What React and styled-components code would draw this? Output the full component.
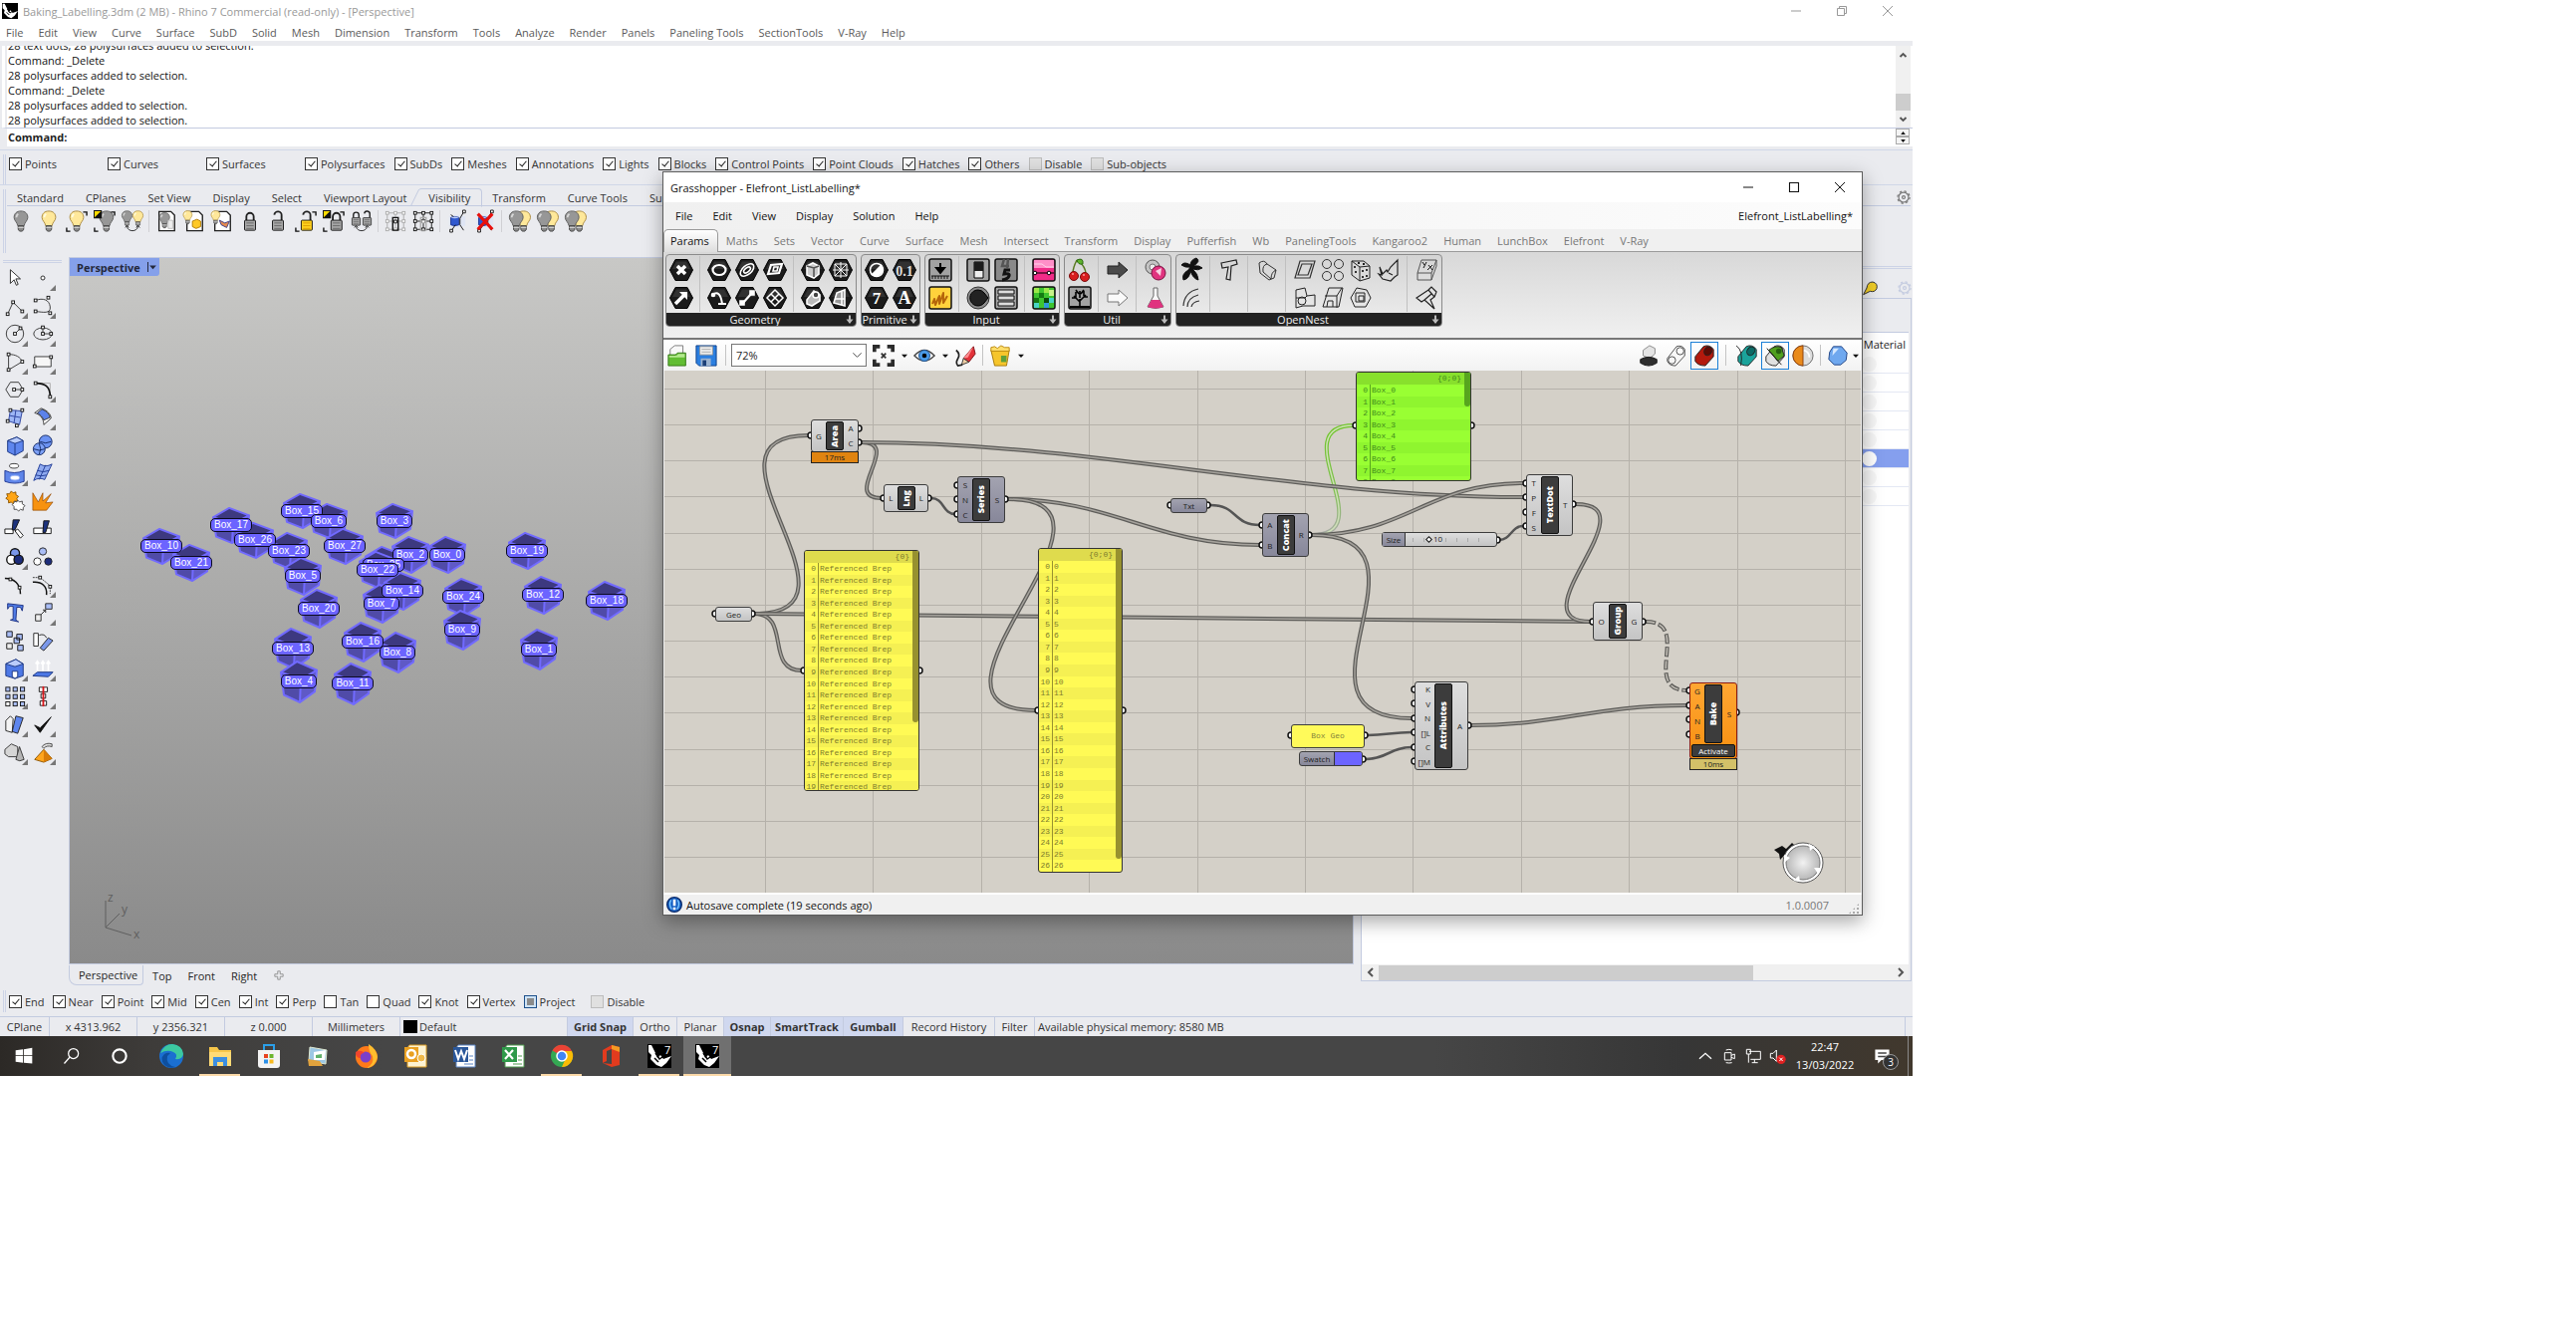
import React from 'react'
import styled, { createGlobalStyle, css } from 'styled-components'

const GlobalStyle = createGlobalStyle`
  *, *::before, *::after {
    box-sizing: border-box;
  }
  body {
    margin: 0;
    background: #fff;
    font-family: 'Open Sans', 'Noto Sans', sans-serif;
    font-size: 11px;
    line-height: 15px;
    color: #1e1e1e;
  }
  button, input, select {
    font: inherit;
    color: inherit;
    margin: 0;
    padding: 0;
    border: 0;
    background: none;
  }
`

const line = '#c3cbe0'
const chrome = '#eaebef'

/* ---------- icons ---------- */

const Svg = styled.svg`
  display: block;
  flex: none;
  width: ${p => p.$size || 24}px;
  height: ${p => p.$size || 24}px;
  overflow: visible;
`

const Icon = ({ name, size }) => (
  <Svg viewBox="0 0 24 24" $size={size} aria-hidden="true">{icons[name]}</Svg>
)

const Bulb = ({ on, x = 0, y = 0, s = 1 }) => (
  <g transform={`translate(${x} ${y}) scale(${s})`}>
    <path d="M12 1C7 1 4.500 4 4.500 8c0 3.500 3.500 5 4 9h7c.5-4 4-5.500 4-9C19.500 4 17 1 12 1z" fill={on ? '#ffe89a' : '#979797'} stroke={on ? '#a8873a' : '#5a5a5a'} />
    <path d="M9 4c-1.500 1-2 2.500-2 4" stroke={on ? '#fffbe0' : '#d8d8d8'} strokeWidth="2" fill="none" />
    <path d="M9 17h6v4l-1.500 2h-3L9 21z" fill="#8a8a8a" stroke="#444" />
    <path d="M9 19h6" stroke="#ddd" />
  </g>
)

const Padlock = ({ open, gold, x = 0, y = 0, s = 1 }) => (
  <g transform={`translate(${x} ${y}) scale(${s})`}>
    <path d={open ? 'M16 11V6a4 4 0 0 0-8-1' : 'M8 11V7a4 4 0 0 1 8 0v4'} fill="none" stroke="#222" strokeWidth="2" />
    <rect x="6" y="11" width="12" height="11" rx="1" fill={gold ? '#ffd21f' : '#a6a6a6'} stroke="#111" />
    <path d="M8 14h8M8 17h8M8 20h8" stroke={gold ? '#d89a00' : '#666'} />
  </g>
)

const Corners = () => <path d="M19 2h4v4M1 19v4h4" fill="none" stroke="#111" strokeWidth="1.500" />
const Invert = () => (
  <g>
    <path d="M0 0h9v9H0z" fill="#111" />
    <path d="M1 1h7L1 8z" fill="#ffdc00" />
  </g>
)
const Swap = () => <path d="M6 18c1 6 11 6 12 0M4 19l2-2 2 2M16 19l2-2 2 2" fill="none" stroke="#222" />
const Sheet = () => <path d="M4 1.500h13l4 4v17H4z" fill="#fff" stroke="#222" strokeWidth="1.500" />
const PointGrid = ({ dark }) => (
  <g fill="#fff" stroke={dark ? '#111' : '#aaa'}>
    <path d="M3 3h18v18H3zM12 3v18M3 12h18" fill="none" />
    {[3, 12, 21].map(x => [3, 12, 21].map(y => <rect key={`${x}-${y}`} x={x - 1.5} y={y - 1.5} width="3" height="3" />))}
    <path d="M9 8h6v14H9z" fill="none" stroke={dark ? '#aaa' : '#111'} strokeWidth="1.500" />
    <path d="M10.500 11h3v3h-3z" stroke={dark ? '#aaa' : '#111'} />
  </g>
)
const ClipBox = () => (
  <g>
    <path d="M3 7l9-2 9 2v10l-9 2-9-2z" fill="#dfe5f4" />
    <path d="M5 8q4-2 9 0v8q-5 2-9 0z" fill="#2f58cf" stroke="#1c3590" />
    <path d="M5 8q4-2 9 0-5 2-9 0z" fill="#b9ccfb" />
    <path d="M19 2L15 9v7l4 6M6 22l4-6M5 5l3 2" fill="none" stroke="#111" />
    <path d="M18 0h3v3h-3zM4 21h3v3H4z" fill="#fff" stroke="#111" />
  </g>
)
const Pt = ({ x, y }) => <rect x={x - 1.5} y={y - 1.5} width="3" height="3" fill="#fff" stroke="#111" />
const Hex = ({ children }) => (
  <g>
    <path d="M.5 12L6 1.500h12L23.500 12 18 22.500H6z" fill="#1b1b1b" stroke="#000" />
    <path d="M3 11L7 3.500h10l4 7.500z" fill="#444" opacity=".55" />
    <g fill="none" stroke="#fff" strokeWidth="1.600">{children}</g>
  </g>
)
const Tile = ({ fill = '#a2a2a2', children }) => (
  <g>
    <rect x="1" y="1" width="22" height="22" rx="2" fill={fill} stroke="#111" strokeWidth="1.500" />
    {children}
  </g>
)
const Tube = ({ a, b }) => (
  <g stroke="#222">
    <path d="M2 13L11 2q6-3 11 3v8l-9 10q-8 0-11-5z" fill={a} />
    <ellipse cx="16" cy="7" rx="4" ry="5" transform="rotate(35 16 7)" fill={b} />
  </g>
)
const RhinoMark = ({ seven }) => (
  <g>
    <path d="M0 0h24v24H0z" fill="#000" />
    <path d="M1 1l3 0 4 8 2 5 3-3 3 4 8-3-5 7-5 4-5-2-6-6 1-4-3-3z" fill="#fff" />
    <path d="M8 9l4 6 3-2M7 14l4 4" stroke="#000" strokeWidth="1.500" fill="none" />
    {seven && <text x="17" y="10" fill="#fff" fontSize="11">7</text>}
  </g>
)

const icons = {
  rhino: <RhinoMark />,
  rhino7: <RhinoMark seven />,
  bulbOff: <Bulb />,
  bulbOn: <Bulb on />,
  bulbSelect: <g><Bulb on /><Corners /></g>,
  bulbInvert: <g><Bulb x={2} /><Invert /><Corners /></g>,
  bulbSwap: <g><Bulb x={-3} s={.75} /><Bulb on x={9} s={.75} /><Swap /></g>,
  sheetBulb: <g><Sheet /><Bulb x={1} y={2} s={.75} /><path d="M14 11h5v9h-5z" fill="#eee" stroke="#bbb" /></g>,
  sheetBox: <g><Sheet /><Bulb on x={-3} s={.65} /><path d="M10 12l5-2 4 2v6l-5 2-4-2z" fill="#ffc928" stroke="#b07a00" /></g>,
  sheetShape: <g><Sheet /><Bulb on x={-3} s={.65} /><path d="M9 11l6 3 5-2-3 7-6-3z" fill="#e78a4e" stroke="#3a3c8a" /></g>,
  lock: <Padlock />,
  unlock: <Padlock open />,
  unlockSelect: <g><Padlock open gold x={1} /><Corners /></g>,
  lockInvert: <g><Padlock x={3} /><Invert /><Corners /></g>,
  lockSwap: <g><Padlock x={-3} s={.75} /><Padlock open x={9} s={.75} /><Swap /></g>,
  points: <PointGrid />,
  pointsDark: <PointGrid dark />,
  clip: <ClipBox />,
  clipOff: <g><ClipBox /><path d="M4 4l16 17M20 4L4 21" stroke="#e8100c" strokeWidth="3.500" /></g>,
  bulbPair: <g><Bulb on x={5} /><Bulb x={-3} /></g>,

  pointer: <path d="M7 3v15l4-4 2.500 6 2-1-2.500-6H18z" fill="#fff" stroke="#222" />,
  point: <circle cx="12" cy="12" r="2.200" fill="#fff" stroke="#222" />,
  polyline: <g fill="none" stroke="#333"><path d="M4 21L10 8l10 10" /><Pt x={4} y={21} /><Pt x={10} y={8} /><Pt x={20} y={18} /></g>,
  curve: <g fill="none" stroke="#333"><path d="M4 6c8-3 15-1 16 7s-8 6-16 5" /><Pt x={4} y={6} /><Pt x={18} y={3} /><Pt x={4} y={18} /><Pt x={20} y={20} /></g>,
  circle: <g fill="none" stroke="#333"><circle cx="12" cy="12" r="9.500" /><path d="M12 12l6-6" /><Pt x={12} y={12} /><Pt x={18} y={6} /></g>,
  ellipse: <g fill="none" stroke="#333"><ellipse cx="12" cy="12" rx="10" ry="6.500" /><path d="M12 5v7h9" /><Pt x={12} y={5} /><Pt x={12} y={12} /><Pt x={21} y={12} /></g>,
  arc: <g fill="none" stroke="#333"><path d="M5 4c8 0 13 3 15 8L5 21z" /><Pt x={5} y={4} /><Pt x={20} y={12} /><Pt x={5} y={21} /></g>,
  rect: <g><path d="M3 6.500h18v11H3z" fill="#f6f6f6" stroke="#333" /><Pt x={3} y={17} /><Pt x={21} y={7} /></g>,
  polygon: <g fill="none" stroke="#333"><path d="M7 4h9l5 8-5 8H7l-5-8z" /><path d="M11 12h9" /><Pt x={11} y={12} /><Pt x={20} y={12} /></g>,
  fillet: <g fill="none"><path d="M4 5h16v15" stroke="#aaa" /><path d="M4 5c10 0 16 3 16 15" stroke="#111" strokeWidth="1.800" /><Pt x={4} y={5} /><Pt x={20} y={20} /></g>,
  surface: <g><path d="M7 4l13 1-3 15-12-4z" fill="#9db6f5" stroke="#2a3f9c" /><path d="M13 4l-2 14M6 10l12 2" stroke="#2a3f9c" /><Pt x={7} y={4} /><Pt x={20} y={4} /><Pt x={4} y={16} /><Pt x={14} y={21} /></g>,
  bend: <g stroke="#333"><path d="M3 7l7-5c7 2 11 7 11 11l-8 7c0-6-3-11-10-13z" fill="#fff" /><path d="M11 3c5 2 8 5 9 9l-7 3c-1-3-4-6-7-8z" fill="#5c82ea" /></g>,
  box: <g stroke="#17327f"><path d="M4 7l10-4 7 4v11l-9 5-8-4z" fill="#5e86ee" /><path d="M4 7l8 3 9-3-7-4z" fill="#b9ccfb" /><path d="M12 10v13" /></g>,
  spheres: <g stroke="#12265f"><circle cx="15" cy="8" r="7" fill="#6b92f2" /><circle cx="8" cy="16" r="6.500" fill="#7ca0f6" /><path d="M2 16q6 3 12 0M8 10q3 6 0 12M9 8q6 3 12 0" fill="none" /></g>,
  pipe: <g stroke="#333"><ellipse cx="11" cy="4" rx="5" ry="2.500" fill="#fff" /><path d="M1 9q10 5 21 0v12q-10 4-21 0z" fill="#5f86ea" stroke="#1c3590" /><ellipse cx="12" cy="17" rx="5" ry="2.500" fill="#fff" stroke="#9db6f5" /></g>,
  mesh: <g stroke="#1f3a94"><path d="M9 2q6 4 13 0l-8 17q-6-3-12 1z" fill="#8faaf0" /><path d="M15 3L8 19M6 9q6 3 13 0M4 14q6 2 12 0" fill="none" /></g>,
  gears: <g><path d="M8 1l2 2 3-1 0 3 3 2-2 2 1 3-3 0-2 3-2-2-3 1 0-3-3-2 2-2-1-3 3 0z" fill="#ffa514" stroke="#8a5300" /><path d="M15 11l2 2 3-1 0 3 3 2-2 2 0 3-3-1-2 2-2-2-3 0 0-3-2-2 2-2 0-2 3 1z" fill="#fff" stroke="#444" /></g>,
  explode: <path d="M1 3l6 10L12 3v9l9-8-6 10 8-1-7 9H1z" fill="#f7920f" stroke="#8d4400" strokeWidth=".7" />,
  trim: <g stroke="#111"><path d="M1 12h9v5H1z" fill="#fff" /><path d="M10 2h7l-5 11H9z" fill="#1c327d" /><path d="M12 14l3-2 6 7-3 3z" fill="#fff" /></g>,
  split: <g stroke="#111"><path d="M2 11h19v6H2z" fill="#fff" /><path d="M13 3h6l-4 13h-3z" fill="#1c327d" /></g>,
  join: <g stroke="#111" strokeWidth="1.500"><circle cx="12" cy="8" r="5" fill="#7b98ea" /><circle cx="8" cy="15" r="5" fill="#fff" /><circle cx="16" cy="15" r="5" fill="#1c2c7a" /></g>,
  group: <g stroke="#222"><circle cx="12" cy="6" r="4" fill="#a9bdf6" /><circle cx="6" cy="17" r="4" fill="#fff" /><circle cx="18" cy="17" r="4" fill="#1c2c7a" /></g>,
  blend: <g fill="none"><path d="M1 5c10 0 17 6 17 17" stroke="#111" strokeWidth="1.600" /><Pt x={7} y={6} /><Pt x={17} y={15} /></g>,
  offset: <g fill="none"><path d="M1 9c10-1 16 5 15 14" stroke="#111" strokeWidth="1.600" /><path d="M1 4h8l11 9v9" stroke="#333" strokeDasharray="2 1" /><Pt x={9} y={4} /><Pt x={20} y={14} /></g>,
  textTool: <path d="M4 2l17 2-1 6-2-4-4 0-1 14 3 2-9-2 3-1V5L6 5 4 8z" fill="#4f7be6" stroke="#1b2f80" />,
  move: <g stroke="#222"><path d="M4 14h6v7H4z" fill="#eee" /><path d="M15 2h7v6h-7z" fill="#a9bdf6" /><path d="M10 14l5-5M12 9h3v3" fill="none" /></g>,
  array: <g stroke="#111" fill="#a9bdf6"><path d="M3 2h6v6H3zM14 5h6v6h-6zM11 9h6v6h-6zM15 17h6v6h-6z" /><path d="M3 15h6v6H3z" fill="#eee" /></g>,
  orient: <g stroke="#222"><path d="M2 4h5v14H2z" fill="#fff" /><path d="M9 20l9-11 5 3-10 11z" fill="#7b98ea" /><path d="M8 6q6-2 8 3" fill="none" /></g>,
  solidCut: <g stroke="#17327f"><path d="M2 7l11-5 8 5v13l-9 3-10-3z" fill="#4e79e6" /><path d="M2 7l10 3 9-3-8-5z" fill="#b9ccfb" /><path d="M9 15h6v6l-3 2-3-2z" fill="#fff" /></g>,
  project: <g><path d="M1 20l5-4h17l-5 5z" fill="#4e79e6" stroke="#17327f" /><path d="M6 15V5M12 15V5M18 15V5M4 7l2-3 2 3M10 7l2-3 2 3M16 7l2-3 2 3" stroke="#fff" strokeWidth="1.800" fill="none" /></g>,
  grid9: <g stroke="#111" fill="#a9bdf6">{[2, 10, 18].map(x => [2, 10, 18].map(y => <rect key={`${x}-${y}`} x={x} y={y} width="4.500" height="4.500" fill={x < 9 && y > 16 ? '#fff' : undefined} />))}</g>,
  align: <g stroke="#111" fill="#fff"><path d="M8 2h9v5H8zM10 9h5v5h-5zM9 17h7v5H9z" /><path d="M12.500 1v22" stroke="#d9171b" strokeWidth="2" /></g>,
  sheetsBlue: <g stroke="#222"><path d="M2 8l5-5 3 3-1 15-7-2z" fill="#f4f4f4" /><path d="M13 3l8 2-6 17-6-2z" fill="#5e86ee" /></g>,
  check: <path d="M3 13l6 8L21 4 9 16z" fill="#111" stroke="#111" />,
  solids: <g stroke="#333"><path d="M1 9l7-6 7 3v11H5l-4-3z" fill="#d5d5d5" /><path d="M17 6l5 14q-5 3-9 0z" fill="#b5b5b5" /></g>,
  pyramid: <g><path d="M13 9L3 20l10 3 9-4z" fill="#ffa51c" stroke="#8a5300" /><path d="M13 9v14l9-4z" fill="#d97c07" /><path d="M11 6q4-5 11-3v3q-6-2-9 2z" fill="#ddd" stroke="#444" /></g>,

  hexX: <Hex><path d="M8 8l8 8M16 8l-8 8" strokeWidth="3.500" /></Hex>,
  hexRing: <Hex><ellipse cx="12" cy="12" rx="6.500" ry="5" strokeWidth="2.200" /></Hex>,
  hexSpiral: <Hex><ellipse cx="12" cy="12" rx="8" ry="4.500" transform="rotate(-40 12 12)" /><ellipse cx="12" cy="12" rx="4" ry="2" transform="rotate(-40 12 12)" /></Hex>,
  hexPlane: <Hex><path d="M5 16l3-9 11-1-3 9z" strokeWidth="2.200" /><path d="M10 13l1-4h4l-1 4z" /></Hex>,
  hexBox: <Hex><path d="M6 8l6-3 6 3v8l-5 4-7-3z" fill="#ccc" /><path d="M6 8l7 2 5-2M13 10v9" stroke="#555" /></Hex>,
  hexNet: <Hex><path d="M6 6h12v12H6zM12 4v16M4 12h16M6 6l12 12M18 6L6 18" strokeWidth="1" /></Hex>,
  hexArrow: <Hex><path d="M6 18L15 9" strokeWidth="3.500" /><path d="M10 6h8v8z" fill="#fff" stroke="none" /></Hex>,
  hexArc: <Hex><path d="M5 9q8-6 10 9M11 18h8" strokeWidth="2" /><circle cx="6" cy="9" r="1.500" fill="#fff" /></Hex>,
  hexLine: <Hex><path d="M8 17l8-9" strokeWidth="2.200" /><path d="M5 15h4v4H5zM15 5h4v4h-4z" fill="#fff" /></Hex>,
  hexCage: <Hex><path d="M12 4l8 8-8 8-8-8zM8 8l8 8M16 8l-8 8" strokeWidth="1.500" /></Hex>,
  hexTube: <Hex><path d="M6 14L13 5l6 4v6l-8 5-5-2z" fill="#bbb" /><circle cx="15" cy="9" r="3" fill="#444" /></Hex>,
  hexSurf: <Hex><path d="M8 7l8-3v16l-11-3z" fill="#999" /><path d="M13 6v13M6 13h10" /></Hex>,
  hexBool: <Hex><circle cx="12" cy="12" r="6.500" /><path d="M16.500 7.500a6.500 6.500 0 0 1-9 9z" fill="#fff" /></Hex>,
  hexNum: <Hex><text x="12" y="17.500" textAnchor="middle" fontSize="14" fontFamily="Liberation Serif, serif" fontWeight="bold" fill="#ddd" stroke="none">0.1</text></Hex>,
  hexInt: <Hex><text x="12" y="18" textAnchor="middle" fontSize="17" fontFamily="Liberation Serif, serif" fontWeight="bold" fill="#fff" stroke="none">7</text></Hex>,
  hexText: <Hex><text x="12" y="18" textAnchor="middle" fontSize="18" fontFamily="Liberation Serif, serif" fontWeight="bold" fill="#fff" stroke="none">A</text></Hex>,
  press: <Tile><path d="M12 5v9M8 10l4 5 4-5z" stroke="#000" strokeWidth="2" /><path d="M3 18h18M4 21v-3M7 21v-3M10 21v-3M13 21v-3M16 21v-3M19 21v-3" stroke="#111" /></Tile>,
  toggle: <Tile><path d="M8 4h9v16H8z" fill="#eee" stroke="#000" /><path d="M8 4h9v9H8z" fill="#1c1c1c" /></Tile>,
  digits: <Tile fill="#8a8a8a"><path d="M10 1l-2 7h7M14 1l-1 9" stroke="#555" strokeWidth="2.500" fill="none" /><path d="M16 12h-5l-1 4q6-1 5 2t-7 4" stroke="#111" strokeWidth="3" fill="none" /></Tile>,
  gradient: <Tile fill="#f02c88"><path d="M2 2h20v8H2z" fill="#ff8fc8" /><path d="M2 6h8l4 3h8" stroke="#ffd2ea" fill="none" /><path d="M2 15h20" stroke="#000" /><circle cx="3" cy="15" r="1.800" fill="#fff" stroke="#000" /><circle cx="17" cy="15" r="1.800" fill="#fff" stroke="#000" /></Tile>,
  sketch: <Tile fill="#ffd23c"><path d="M4 18l2-5 1 6 4-9 0 8 4-11 0 10 4-7" stroke="#b5660b" strokeWidth="2" fill="none" strokeLinejoin="round" /></Tile>,
  knob: <g><circle cx="12" cy="12" r="11" fill="#8d8d8d" stroke="#333" /><path d="M12 4a8 8 0 1 0 6 13l4-5-4-5a8 8 0 0 0-6-3z" fill="#222" stroke="#000" /></g>,
  list: <Tile><path d="M4 4h16v4H4zM4 10h16v4H4zM4 16h16v4H4z" fill="#ddd" stroke="#111" /></Tile>,
  swatches: <Tile fill="#3ec52f"><path d="M2 2h5v5H2zM12 2h5v5h-5z" fill="#9be84a" /><path d="M7 7h5v5H7zM2 12h5v5H2z" fill="#147a12" /><path d="M12 12h5v5h-5z" fill="#0a4d0c" /><path d="M17 12h5v5h-5zM2 17h5v5H2z" fill="#48d5c4" /><path d="M12 17h5v5h-5z" fill="#2f9ad8" /><path d="M17 4h5v6h-5z" fill="#c8f28a" /></Tile>,
  cherry: <g><path d="M9 2q-4 8-4 13M10 2q8 7 8 14" stroke="#5a7a22" fill="none" strokeWidth="1.500" /><path d="M9 2q7-3 6 4-5 1-6-4z" fill="#5fb42d" stroke="#2d6a12" /><circle cx="6" cy="18" r="4.500" fill="#d81e1e" stroke="#7a0b0b" /><circle cx="17" cy="19" r="4.500" fill="#d81e1e" stroke="#7a0b0b" /><path d="M4 16h2M15 17h2" stroke="#ff9c9c" strokeWidth="1.500" /></g>,
  tree: <Tile><path d="M2 20h20v2H2z" /><path d="M12 21v-8M12 16L6 10M12 15l6-6M12 12V5M9 12H4M16 11h4M8 11V6M16 10V5M11 8L8 4M13 8l3-4" stroke="#000" strokeWidth="1.600" /></Tile>,
  arrowDark: <path d="M2 8h11V4l9 8-9 8v-4H2z" fill="#4a4a4a" stroke="#222" />,
  arrowLight: <path d="M2 8h11V4l9 8-9 8v-4H2z" fill="#fafafa" stroke="#777" />,
  rings: <g><circle cx="9" cy="9" r="7" fill="#c4c4c4" stroke="#555" /><circle cx="9" cy="9" r="3" fill="#eee" stroke="#777" /><circle cx="15" cy="15" r="7" fill="#e0337f" stroke="#7a1040" /><path d="M12 13l6-3-1 8z" fill="#f7d2e2" /></g>,
  flask: <g><path d="M10 2h4v8l6 11q-8 3-16 0l6-11z" fill="#f7f7f7" stroke="#666" /><path d="M8 14h8l4 7q-8 3-16 0z" fill="#e0337f" /></g>,
  leaves: <path d="M11 9q-5 1-9-2 3-4 9 0 0-5 6-7 5 3-3 8 6-1 9 2-4 3-10 1 6 5 6 11-5-1-8-9-1 8-7 9-2-6 5-10z" fill="#111" stroke="#111" />,
  tShape: <path d="M4 5l15-3 1 4-6 2-1 14-4-1 2-12-6 1z" fill="none" stroke="#222" strokeWidth="1.200" />,
  rolled: <g fill="none" stroke="#333"><path d="M4 5q5-4 8 1l9 6-2 8-5 2-9-7z" /><path d="M12 6q-5 1-4 8l8 7M21 12q-5 2-5 9" /></g>,
  waves: <g fill="none" stroke="#333" strokeWidth="1.200"><path d="M4 20Q5 6 19 3M8 21q0-9 11-12M12 21q1-5 8-6" /></g>,
  para: <path d="M7 3h15l-5 17H2zM9 6h10l-4 11H5z" fill="none" stroke="#333" strokeWidth="1.200" />,
  circles4: <g fill="none" stroke="#333"><circle cx="6" cy="6" r="4.500" /><circle cx="18" cy="6" r="4.500" /><circle cx="6" cy="18" r="4.500" /><circle cx="18" cy="18" r="4.500" /></g>,
  dice: <g fill="none" stroke="#222"><path d="M3 3l12 0 6 5v12l-10 3-8-6zM3 3l8 6 10-1M11 9v14" /><path d="M6 8v2M7 13v2M14 12v2M18 11v2M14 18v2M18 17v2M9 5h2M14 6h2" strokeWidth="1.800" /></g>,
  rhinoHead: <path d="M3 9l3 7 4-4 1 2 3-5 7-7v15l-3 2-4 4-8-2-4-5 3 1zM12 15l4 2" fill="none" stroke="#222" strokeWidth="1.200" />,
  nestPoly: <g fill="none" stroke="#222"><path d="M3 4l9-2 2 8 8-1v11H10l-7 2zM3 12h9l2-2" /><circle cx="9" cy="15" r="4" /></g>,
  nestBox: <g fill="none" stroke="#222"><path d="M8 2h14l-4 19H2zM4 10h12l5-8M16 10v12M6 21l1-6h5v6" /></g>,
  nestHex: <g fill="none" stroke="#222"><path d="M8 2l10 2 4 8-5 9-11 0-4-9z" /><path d="M7 7h9v9H7zM10 10h5v5h-5z" /></g>,
  sheetXY: <g fill="none" stroke="#555"><path d="M7 2h15l-5 13H3zM3 15v7h14v-7M17 22l5-14V2" /><path d="M8 4l2 3M12 4l-3 6M14 7l4 5M18 7l-5 5" stroke="#111" /></g>,
  fold: <path d="M2 12l12-8 6 7-4 3 4 9-10-9-3 2zM14 4l3-3 5 5-2 5M10 14l7-6" fill="none" stroke="#222" strokeWidth="1.200" />,

  open: <g><path d="M3 12V5l5-4h9v10z" fill="#f8f8f8" stroke="#777" /><path d="M1 11h8l2-2h9v14H1z" fill="#62bd33" stroke="#2f7312" /><path d="M2 12h8l2-2h7v4H2z" fill="#b4e88f" /></g>,
  save: <g><path d="M1 1h22v22H4l-3-3z" fill="#2b7fe0" stroke="#0c3d85" /><path d="M5 2h14v9H5z" fill="#eee" stroke="#999" /><path d="M6 15h11v8H6z" fill="#9cb3d0" /><path d="M8 17h4v6H8z" fill="#1b3f78" /><path d="M7 5h10M7 8h10" stroke="#aaa" /></g>,
  extents: <g fill="none" stroke="#2b2b2b"><path d="M8 2H2v6M16 2h6v6M8 22H2v-6M16 22h6v-6" strokeWidth="4" /><path d="M9.500 9.500l5 5M14.500 9.500l-5 5" strokeWidth="1.800" /></g>,
  eye: <g><path d="M1 12Q12 0 23 12 12 23 1 12z" fill="#fff" stroke="#444" strokeWidth="1.500" /><circle cx="12" cy="12" r="6" fill="#4a9be8" stroke="#1b4f8c" /><circle cx="12" cy="12" r="2.500" fill="#000" /></g>,
  pencil: <g><path d="M21 2l2 8-7 9-6-4z" fill="#e3323a" stroke="#7a1217" /><path d="M21 2l-6 12-5 1z" fill="#ff8d90" /><path d="M10 15l6 4-8 3z" fill="#f0cfa5" stroke="#333" /><path d="M2 6q5 4 2 9t0 8l5-1" stroke="#222" strokeWidth="1.800" fill="none" /></g>,
  bin: <g><path d="M2 6h20l-3 17H6z" fill="#f6c52b" stroke="#a27508" /><path d="M2 3l4-1 3 2 4-3 4 2 5 0v4H2z" fill="#ffdf6b" stroke="#b8860b" /><path d="M13 12h6v7h-6z" fill="#5fa03a" /></g>,
  prevOff: <g><path d="M6 6l7-5 6 3v6l-6 5-7-3z" fill="#e4e4e4" stroke="#888" /><path d="M3 16q9-5 18 0v4q-9 6-18 0z" fill="#2e2e2e" stroke="#111" /></g>,
  prevWire: <g fill="none" stroke="#444"><path d="M2 15L12 2q6-2 9 3v7L11 23q-7 0-9-5z" /><circle cx="7" cy="17" r="4" /><circle cx="16" cy="7" r="4" /></g>,
  prevShade: <Tube a="#b3190d" b="#5e0b05" />,
  tealTube: <g><Tube a="#1ba39b" b="#0c6a65" /><path d="M0 1q8 5 5 22" stroke="#222" fill="none" /></g>,
  greenTube: <g><Tube a="#e0e0e0" b="#e0e0e0" /><path d="M5 6q7-6 14-3l3 9-7 6z" fill="#4f9f1e" stroke="#222" /><circle cx="16" cy="7" r="3" fill="#276010" /><path d="M3 4l16 18" stroke="#111" /></g>,
  ball: <g><circle cx="12" cy="12" r="11" fill="#ddd" stroke="#666" /><path d="M12 1a11 11 0 0 0 0 22z" fill="#e98a1b" stroke="#8a3b08" /><path d="M13 6q6 2 6 8" stroke="#fff" strokeWidth="2" fill="none" /></g>,
  crystal: <g><path d="M7 2h9l6 7-1 8-6 5H8l-6-6 1-8z" fill="#6fa8ef" stroke="#1e3f80" /><path d="M7 4h6l-7 8z" fill="#d5e8ff" /></g>,

  start: <path d="M2 5l9-1v7H2zM12 4l10-2v9H12zM2 12h9v8l-9-1zM12 12h10v9l-10-1z" fill="#fff" />,
  search: <g fill="none" stroke="#fff" strokeWidth="1.500"><circle cx="14" cy="9" r="6" /><path d="M9.500 13.500L3 21" /></g>,
  cortana: <circle cx="12" cy="12" r="8" fill="none" stroke="#fff" strokeWidth="2.500" />,
  edge: <g><circle cx="12" cy="12" r="12" fill="#1b6fd0" /><path d="M1 9Q5 0 13 0q10 1 11 10-1 6-8 5 3-5-2-7-6-3-13 1z" fill="#3cc8a0" /><path d="M8 12q-2 9 8 11-6 2-11-2-5-6 0-11 3-2 6-1z" fill="#0e4f9e" /></g>,
  explorer: <g><path d="M1 3h8l2 3h12v16H1z" fill="#f7c64a" /><path d="M1 8h22v14H1z" fill="#ffdb76" /><path d="M5 13h14v9h-4v-4H9v4H5z" fill="#3d8fe0" /></g>,
  store: <g><path d="M7 6V1h10v5" stroke="#2b9fe8" strokeWidth="2" fill="none" /><path d="M1 6h22v15q0 3-3 3H4q-3 0-3-3z" fill="#f3f3f3" /><path d="M7 10h4v4H7z" fill="#e8421f" /><path d="M12.500 10h4v4h-4z" fill="#6cb52d" /><path d="M7 15.500h4v4H7z" fill="#2b8fe8" /><path d="M12.500 15.500h4v4h-4z" fill="#f7b91e" /></g>,
  mail: <g><path d="M4 3l17 3-1 14-17-3z" fill="#9cc7e4" stroke="#dfe8d0" /><path d="M8 8l12-2-1 10H8z" fill="#fff" /><path d="M2 15l12 2 3 5H3z" fill="#e0a23d" /><path d="M10 11l6-1v4h-6z" fill="#5fb06a" /></g>,
  firefox: <g><circle cx="12" cy="13" r="11" fill="#ff7a1a" /><path d="M14 0q8 5 9 13-2 10-11 11Q20 20 18 12 14 8 14 0z" fill="#ffbd2e" /><circle cx="11" cy="13" r="5.500" fill="#7b3fc9" /><path d="M1 8q5-3 9 1-5 0-4 5-5 0-5-6z" fill="#f2442e" /></g>,
  outlook: <g><path d="M6 1h17v22H4V4z" fill="#fdf3d2" stroke="#d99b23" /><path d="M1 3h14v15H1z" fill="#e9a021" /><circle cx="8" cy="10" r="4" fill="none" stroke="#fff" strokeWidth="2.500" /><circle cx="18" cy="14" r="4" fill="#f0b94a" stroke="#fff" /></g>,
  word: <g><path d="M6 1h17v22H4V4z" fill="#fff" stroke="#5b85c5" /><path d="M1 3h15v15H1z" fill="#2a579a" /><path d="M3 6l3 9 3-8 3 8 3-9" stroke="#fff" strokeWidth="2" fill="none" /><path d="M12 20h9M17 16h4M17 12h4" stroke="#5b85c5" /></g>,
  excel: <g><path d="M6 1h17v22H4V4z" fill="#fff" stroke="#4f9a4f" /><path d="M1 3h15v15H1z" fill="#2f9a4a" /><path d="M4 6l8 9M12 6l-8 9" stroke="#fff" strokeWidth="2.200" fill="none" /><path d="M12 20h9M17 16h4M17 12h4" stroke="#4f9a4f" /></g>,
  chrome: <g><circle cx="12" cy="12" r="11" fill="#34a853" /><path d="M12 12L2.500 6.500A11 11 0 0 1 22 7z" fill="#ea4335" /><path d="M22 7A11 11 0 0 1 12 23l4-9-4-7z" fill="#fbbc05" /><circle cx="12" cy="12" r="5" fill="#4285f4" stroke="#fff" strokeWidth="1.500" /></g>,
  office: <g><path d="M4 6l9-5 8 2v18l-8 2-9-4 9 1V5L8 7v10l-4 2z" fill="#e23b1e" /><path d="M13 1l8 2v5l-8-3z" fill="#f59a23" /></g>,
  chevron: <path d="M3 16l9-8 9 8" fill="none" stroke="#fff" strokeWidth="2" />,
  meet: <g fill="none" stroke="#fff" strokeWidth="1.500"><path d="M5 7h10v11H5zM15 11l5-2v7l-5-2M7 3q5-2 9 0M7 22q5 1 9 0" /></g>,
  network: <g fill="none" stroke="#fff" strokeWidth="1.500"><path d="M6 5h17v12H8M14 17v5M10 22h9M2 2h6v7H2zM5 9v13" /></g>,
  muted: <g><path d="M2 8h4l5-5v17l-5-5H2z" fill="none" stroke="#fff" strokeWidth="1.500" /><circle cx="18" cy="17" r="7" fill="#e02222" /><path d="M15.500 14.500l5 5M20.500 14.500l-5 5" stroke="#fff" strokeWidth="1.500" /></g>,
  note: <g><path d="M2 2h20v15H11l-5 5v-5H2z" fill="#fff" /><path d="M6 7h12M6 12h12" stroke="#444" strokeWidth="2" /></g>,
  minimize: <path d="M2 12h20" stroke="currentColor" strokeWidth="2" />,
  maximize: <path d="M3 3h18v18H3z" stroke="currentColor" strokeWidth="2.200" fill="none" />,
  restore: <path d="M3 7h14v14H3zM7 7V3h14v14h-4" stroke="currentColor" strokeWidth="2" fill="none" />,
  close: <path d="M2 2l20 20M22 2L2 22" stroke="currentColor" strokeWidth="2" />,
  caret: <path d="M3 8h18l-9 10z" fill="currentColor" />,
  chevUp: <path d="M4 16l8-8 8 8" stroke="#555" strokeWidth="5" fill="none" />,
  chevDown: <path d="M4 8l8 8 8-8" stroke="#555" strokeWidth="5" fill="none" />,
  chevLeft: <path d="M16 4l-8 8 8 8" stroke="#555" strokeWidth="4" fill="none" />,
  chevRight: <path d="M8 4l8 8-8 8" stroke="#555" strokeWidth="4" fill="none" />,
  tri: <path d="M4 17h16L12 7z" fill="#111" />,
  triDown: <path d="M4 7h16l-8 10z" fill="#111" />,
  gear: <g fill="none" stroke="currentColor" strokeWidth="2"><circle cx="12" cy="12" r="2.500" /><circle cx="12" cy="12" r="8.500" /><circle cx="12" cy="12" r="10.500" strokeDasharray="4 4.200" /></g>,
  bulbLying: <path d="M1 22l5-10q1-9 9-9 8 2 6 10-3 6-10 4z" fill="#f2cf27" stroke="#333" strokeWidth="1.500" />,
  plus: <path d="M9 2h6v7h7v6h-7v7H9v-7H2V9h7z" fill="none" stroke="#888" strokeWidth="2" />,
  info: <g><circle cx="12" cy="12" r="11" fill="#1560c4" stroke="#0a2a6a" strokeWidth="2" /><path d="M7 5q-4 7 1 14M17 5q4 7-1 14" stroke="#7cc8ff" fill="none" strokeWidth="2" /><path d="M10 4h4v10h-4zM10 16h4v4h-4z" fill="#fff" /></g>,
  down: <path d="M10 3h4v8h5l-7 9-7-9h5z" fill="#bbb" />
}

/* ---------- shared controls ---------- */

const Button = styled.button`
  display: flex;
  align-items: center;
  justify-content: center;
  white-space: nowrap;
  cursor: pointer;
`

const IconButton = styled(Button)`
  position: relative;
  width: 28px;
  height: 28px;
  ${p => p.$active && css`
    outline: 1px solid #1a7fd6;
    outline-offset: -1px;
  `}
  ${p => p.$flyout && css`
    &::after {
      content: '';
      position: absolute;
      right: 1px;
      bottom: 1px;
      border: 3px solid transparent;
      border-right-color: #777;
      border-bottom-color: #777;
    }
  `}
`

const ToolButton = ({ name, size = 22, ...rest }) => (
  <IconButton type="button" aria-label={name} {...rest}>
    <Icon name={name} size={size} />
  </IconButton>
)

const MiniButton = styled(Button)`
  width: ${p => p.$w || 15}px;
  height: ${p => p.$h || 15}px;
  color: ${p => p.$color || '#111'};
`

const Check = styled.label`
  display: flex;
  align-items: center;
  gap: 3px;
  white-space: nowrap;
  min-width: ${p => (p.$wide ? 90 : 0)}px;
  margin-left: ${p => (p.$apart ? 8 : 0)}px;
  color: #333;
`

const CheckInput = styled.input`
  appearance: none;
  position: relative;
  width: 13px;
  height: 13px;
  background: #fff;
  border: 1px solid #333;
  &:checked::after {
    content: '';
    position: absolute;
    left: 4px;
    top: 1px;
    width: 4px;
    height: 7px;
    border: solid #222;
    border-width: 0 1px 1px 0;
    transform: rotate(40deg);
  }
  &:disabled {
    background: #e0e0e0;
    border-color: #bcbcbc;
  }
  ${p => p.$partial && css`
    background: #8a8a8a;
    border-color: #1c4f8a;
    box-shadow: inset 0 0 0 2px #cfe3f5;
  `}
`

const CheckBox = ({ label, wide, apart, off, disabled, partial }) => (
  <Check $wide={wide} $apart={apart}>
    <CheckInput type="checkbox" defaultChecked={!off && !disabled && !partial} disabled={disabled} $partial={partial} />
    {label}
  </Check>
)

/* ---------- main window ---------- */

const Desktop = styled.div`
  position: relative;
  display: flex;
  flex-direction: column;
  max-width: 1920px;
  background: ${chrome};
`

const TitleBar = styled.header`
  display: flex;
  align-items: center;
  height: 24px;
  padding: 0 11px 2px 2px;
  gap: 5px;
  background: #fff;
  color: #999;
`

const WindowButtons = styled.div`
  display: flex;
  gap: 18px;
  margin-left: auto;
`

const MenuBar = styled.nav`
  display: flex;
  gap: 15px;
  height: 17px;
  padding-left: 6px;
  background: #fff;
  color: #5a5a5a;
`

const History = styled.section`
  display: flex;
  margin-top: 5px;
  height: 83px;
  background: #fff;
  border-left: 7px double ${chrome};
  border-bottom: 1px solid ${line};
  overflow: hidden;
  color: #111;
`

const HistoryLines = styled.div`
  flex: 1;
  display: flex;
  flex-direction: column;
  justify-content: flex-end;
  padding-left: 1px;
`

const ScrollColumn = styled.div`
  display: flex;
  flex-direction: column;
  width: 15px;
  margin-right: 2px;
  background: #f0f0f0;
`

const ScrollThumb = styled.div`
  height: 17px;
  margin-top: auto;
  background: #cdcdcd;
`

const CommandRow = styled.div`
  display: flex;
  align-items: center;
  height: 18px;
  margin-left: 7px;
  padding: 0 0 2px 1px;
  background: #fff;
  font-weight: 700;
`

const CommandInput = styled.input`
  flex: 1;
  height: 15px;
  padding: 0 4px;
  outline: none;
`

const Spinner = styled.div`
  margin-right: 3px;
  ${MiniButton} {
    border: 1px solid #aaa;
    background: #f4f4f4;
  }
`

const Bar = styled.div`
  display: flex;
  align-items: center;
  gap: 8px;
  height: 22px;
  margin: 4px 2px 0 3px;
  padding-left: 3px;
  border-left: 3px double #ccd3e6;
`

const FilterBar = styled(Bar)`
  align-items: flex-start;
  gap: 9px;
  height: 30px;
  padding-top: 2px;
`

const ToolBar = styled(Bar)`
  flex-direction: column;
  align-items: stretch;
  gap: 1px;
  height: 64px;
  padding-left: 1px;
`

const Rule = styled.hr`
  height: 1px;
  margin: ${p => p.$top || 0}px 0 0;
  border: 0;
  background: #d0d7e8;
`

const ToolTabs = styled.div`
  display: flex;
  align-items: center;
  gap: 22px;
  height: 17px;
  padding-left: 10px;
  border-bottom: 1px solid ${line};
  color: #333;
`

const ToolTab = styled(Button)`
  position: relative;
  height: 17px;
  ${p => p.$active && css`
    &::before {
      content: '';
      position: absolute;
      inset: -1px -12px -1px -10px;
      border: 1px solid ${line};
      border-bottom-color: ${chrome};
      border-left-color: transparent;
      border-radius: 3px 4px 0 0;
    }
    &::after {
      content: '';
      position: absolute;
      left: -14px;
      top: 0;
      height: 17px;
      border-left: 1px solid ${line};
      transform: skewX(-26deg);
    }
  `}
`

const GearButton = styled(MiniButton)`
  margin-left: auto;
`

const IconRow = styled.div`
  display: flex;
  height: 28px;
`

const IconGap = styled.span`
  width: 1px;
  height: 22px;
  margin: 3px 3px 3px 2px;
  background: #d0d0d4;
`

const Workspace = styled.main`
  display: grid;
  grid-template-columns: 69px minmax(0, 1fr) 554px;
  margin-top: 4px;
`

const ToolColumn = styled.aside`
  padding: 3px 7px 0 1px;
`

const ToolGrid = styled.div`
  display: grid;
  grid-template-columns: 28px 28px;
  margin-top: 1px;
`

const Grip = styled.div`
  height: 3px;
  margin: 0 0 0 2px;
  border-top: 3px double #ccd3e6;
`

const ViewColumn = styled.section`
  display: flex;
  flex-direction: column;
  margin-right: 7px;
`

const Viewport = styled.div`
  position: relative;
  height: 710px;
  border: 1px solid ${line};
  background: linear-gradient(#c8c8c6, #8a8a8a);
  overflow: hidden;
`

const ViewTitle = styled(Button)`
  gap: 7px;
  height: 18px;
  padding: 0 2px 0 7px;
  background: #85a0ea;
  border-bottom-right-radius: 3px;
  color: #24293c;
  font-weight: 700;
  svg {
    border-left: 1px solid #24293c;
  }
`

const ViewTabs = styled.div`
  display: flex;
  align-items: center;
  gap: 16px;
  height: 22px;
`

const ViewTab = styled(Button)`
  height: 20px;
  ${p => p.$active && css`
    padding: 0 5px 0 9px;
    margin-right: -7px;
    border: 1px solid ${line};
    border-top: 0;
    border-radius: 0 0 4px 8px;
  `}
`

const Crate = styled.div`
  position: absolute;
  display: flex;
  align-items: center;
  justify-content: center;
  width: 42px;
  height: 42px;
  margin: -21px 0 0 -21px;
`

const CrateShape = styled.svg`
  position: absolute;
  width: 40px;
`

/* labels stay in front of every box, not only their own */
const Dot = styled.span`
  position: relative;
  z-index: 1;
  padding: 0 3px;
  border: 1px solid #0b0a20;
  border-radius: 5px;
  background: #6c64ff;
  color: #fff;
  font: 10px/12px 'Liberation Sans', Arial, sans-serif;
`

const Axes = styled.svg`
  position: absolute;
  left: 30px;
  bottom: 20px;
  width: 50px;
  height: 52px;
  font-size: 12px;
`

const crates = [
  [15, 303, 513], [6, 330, 523], [3, 396, 523], [17, 232, 527], [26, 256, 542],
  [10, 162, 548], [21, 192, 565], [23, 290, 553], [27, 346, 548], [2, 412, 557],
  [0, 449, 557], [19, 529, 553], [25, 385, 567], [22, 379, 572], [5, 304, 578],
  [14, 404, 593], [7, 383, 606], [24, 465, 599], [12, 545, 597], [18, 609, 603],
  [20, 320, 611], [9, 464, 632], [16, 364, 644], [13, 294, 651], [8, 399, 655],
  [1, 541, 652], [4, 300, 684], [11, 354, 686]
]

const Crates = () => crates.map(([id, x, y]) => (
  <Crate key={id} style={{ left: x - 70, top: y - 259 }}>
    <CrateShape viewBox="0 0 40 40" height={Math.round(36 + (y - 513) / 25)} preserveAspectRatio="none">
      <path d="M18 1l20 8-2 20-15 10L5 32 2 11z" fill="#504ba8" />
      <path d="M18 1l20 8-16 9L2 11z" fill="#3d3980" />
      <path d="M22 18l16-9-2 20-15 10z" fill="#5f59c6" />
      <path d="M18 1l20 8-2 20-15 10L5 32 2 11zM2 11l20 7 16-9M22 18l-1 21" fill="none" stroke="#716aff" strokeWidth="2" />
    </CrateShape>
    <Dot>Box_{id}</Dot>
  </Crate>
))

const SidePanel = styled.aside`
  display: flex;
  flex-direction: column;
  height: 718px;
  margin: 9px 1px 0 0;
  border-top: 3px double #ccd3e6;
`

const SideTools = styled.div`
  display: flex;
  align-items: center;
  justify-content: flex-end;
  gap: 19px;
  height: 29px;
  padding-top: 9px;
`

const SideBody = styled.div`
  flex: 1;
  display: flex;
  flex-direction: column;
  padding: 33px 2px 0 0;
  border: 1px solid ${line};
`

const LayerTable = styled.table`
  width: 100%;
  border-top: 1px solid ${line};
  border-spacing: 0;
  background: #fff;
  th {
    height: 22px;
    padding: 0 3px 0 0;
    font-weight: 400;
    text-align: right;
  }
`

const LayerCell = styled.td`
  height: 19px;
  padding: 0 32px 0 0;
  border-bottom: 1px solid #e4e8f4;
  background: ${p => (p.$selected ? '#859fee' : '#fff')};
  i {
    display: block;
    width: 15px;
    height: 15px;
    margin-left: auto;
    border-radius: 50%;
    background: ${p => (p.$selected ? '#fff' : '#f7f7f7')};
  }
`

const LayerSpace = styled.div`
  flex: 1;
  background: #fff;
`

const ScrollRow = styled.div`
  display: flex;
  align-items: center;
  height: 16px;
  background: #f0f0f0;
`

const ScrollBarX = styled.div`
  flex: 1;
  height: 15px;
  background: linear-gradient(90deg, #cdcdcd 73%, #f0f0f0 73%);
`

const StatusBar = styled.footer`
  display: flex;
  height: 20px;
  margin-top: 4px;
  border-top: 1px solid ${line};
  padding-right: 7px;
`

const StatusCell = styled.div`
  display: flex;
  align-items: center;
  justify-content: ${p => (p.$left ? 'flex-start' : 'center')};
  gap: 2px;
  width: ${p => p.$w}px;
  flex: ${p => (p.$w ? 'none' : '1')};
  padding-left: ${p => (p.$left ? 3 : 0)}px;
  border-right: 1px solid ${line};
  white-space: nowrap;
  color: #333;
  ${p => p.$on && css`
    background: #d0d8ef;
    font-weight: 700;
  `}
`

const ColorChip = styled.span`
  width: 14px;
  height: 13px;
  background: #000;
`

/* ---------- grasshopper window ---------- */

const GhWindow = styled.section`
  position: absolute;
  z-index: 2;
  left: 665px;
  right: 50px;
  top: 172px;
  display: flex;
  flex-direction: column;
  border: 1px solid #5c5c5c;
  background: #f0f0f0;
  box-shadow: 0 6px 18px rgba(0, 0, 0, .35);
`

const GhTitle = styled.header`
  display: flex;
  align-items: center;
  height: 30px;
  padding: 0 8px 0 7px;
  background: #fff;
  color: #111;
`

const GhMenu = styled.nav`
  display: flex;
  align-items: center;
  gap: 20px;
  height: 27px;
  padding: 0 9px 0 12px;
  background: linear-gradient(90deg, #f0f0f0, #fcfcfc);
  color: #111;
  button:last-child {
    margin-left: auto;
  }
`

const GhTabs = styled.div`
  display: flex;
  align-items: center;
  gap: 16px;
  height: 23px;
  border-bottom: 1px solid #9a9a9a;
  color: #777;
`

const GhTab = styled(Button)`
  height: 22px;
  ${p => p.$active && css`
    height: 23px;
    padding: 0 8px 2px 6px;
    margin: 0 -8px -1px 0;
    border: 1px solid #9a9a9a;
    border-bottom: 0;
    border-radius: 5px 5px 0 0;
    background: linear-gradient(#fff, #ddd);
    color: #111;
  `}
`

const Ribbon = styled.div`
  display: flex;
  gap: 4px;
  height: 86px;
  padding: 2px 0 11px 2px;
  background: linear-gradient(#d8d8d8, #f0f0f0);
`

const RibbonPanel = styled.section`
  display: flex;
  flex-direction: column;
  border: 1px solid #8a8a8a;
  border-radius: 4px;
  background: linear-gradient(#d4d4d4, #eee);
  overflow: hidden;
`

const RibbonIcons = styled.div`
  flex: 1;
  display: flex;
  padding: 1px;
`

const RibbonGroup = styled.div`
  display: grid;
  grid-auto-flow: column;
  grid-template-rows: 28px 28px;
  & + & {
    margin-left: 4px;
    padding-left: 5px;
    border-left: 1px solid #c0c0c0;
  }
`

const RibbonName = styled.div`
  display: flex;
  align-items: center;
  height: 13px;
  background: #222;
  color: #eee;
  span {
    flex: 1;
    text-align: center;
  }
`

const CanvasBar = styled.div`
  display: flex;
  align-items: center;
  height: 33px;
  padding: 0 3px 0 1px;
  border-top: 2px solid #777;
  background: linear-gradient(#fff, #f2f2f2);
`

const BarGap = styled.span`
  width: 1px;
  height: 21px;
  margin: 0 ${p => p.$m || 3}px;
  background: #c4c4c4;
`

const ZoomSelect = styled.select`
  appearance: none;
  width: 136px;
  height: 23px;
  padding: 0 4px;
  border: 1px solid #777;
  background: #fff;
`

const ZoomBox = styled.div`
  position: relative;
  margin-right: 3px;
  svg {
    position: absolute;
    right: 5px;
    top: 7px;
    pointer-events: none;
  }
`

const Spacer = styled.span`
  flex: 1;
`

const Canvas = styled.div`
  position: relative;
  height: 524px;
  margin: 0 1px;
  background: #d4d0c8;
  overflow: hidden;
`

const Wires = styled.svg`
  position: absolute;
  inset: 0;
  width: 100%;
  height: 100%;
`

const GhStatus = styled.footer`
  display: flex;
  align-items: center;
  gap: 4px;
  height: 22px;
  padding-left: 3px;
  border-top: 2px solid #fff;
  color: #111;
`

const Version = styled.span`
  margin-left: auto;
  color: #777;
`

const SizeGrip = styled.span`
  width: 10px;
  height: 10px;
  margin: 8px 3px 0 16px;
  background: radial-gradient(circle at 1px 1px, #aaa 1px, transparent 1px) 0 0 / 4px 4px;
  clip-path: polygon(100% 0, 100% 100%, 0 100%);
`

const tones = {
  light: 'linear-gradient(#dedede, #c4c4c4)',
  dim: 'linear-gradient(#a3a3b0, #87879a)',
  orange: 'linear-gradient(#ffa733, #f78f10)'
}

const NodeBox = styled.div`
  position: absolute;
  display: flex;
  flex-direction: column;
  border: 1px solid ${p => (p.$tone === 'orange' ? '#8c1b12' : '#3c3c3c')};
  border-radius: 3px;
  background: ${p => tones[p.$tone]};
  color: #222;
  font-size: 8px;
  line-height: 10px;
`

const NodeBody = styled.div`
  flex: 1;
  display: flex;
  min-height: 0;
`

const Ports = styled.div`
  flex: 1;
  display: flex;
  flex-direction: column;
  align-items: ${p => (p.$end ? 'flex-end' : 'center')};
  justify-content: space-around;
  padding-right: ${p => (p.$end ? 4 : 0)}px;
`

const NodeName = styled.div`
  display: flex;
  align-items: center;
  justify-content: center;
  width: 18px;
  margin: 1px 0;
  border: 1px solid #111;
  border-radius: 2px;
  background: #3c3c3c;
  color: #fff;
  font-size: 9px;
  font-weight: 800;
  span {
    writing-mode: vertical-rl;
    transform: rotate(180deg);
  }
`

const NodeTimer = styled.div`
  position: absolute;
  left: -1px;
  right: -1px;
  top: 100%;
  height: 12px;
  border: 1px solid #222;
  background: ${p => p.$bg};
  text-align: center;
`

const NodeAction = styled(Button)`
  height: 13px;
  margin: 0 1px 1px;
  border: 1px solid #111;
  border-radius: 2px;
  background: #3c3c3c;
  color: #fff;
`

const Node = ({ at: [x, y, w, h], tone = 'light', name, ins, outs, end, timer, timerBg, action }) => (
  <NodeBox $tone={tone} style={{ left: x, top: y, width: w, height: h }}>
    <NodeBody>
      <Ports $end={end}>{ins.map((p, i) => <span key={i}>{p}</span>)}</Ports>
      <NodeName><span>{name}</span></NodeName>
      <Ports>{outs.map((p, i) => <span key={i}>{p}</span>)}</Ports>
    </NodeBody>
    {action && <NodeAction type="button">{action}</NodeAction>}
    {timer && <NodeTimer $bg={timerBg}>{timer}</NodeTimer>}
  </NodeBox>
)

const Param = styled(NodeBox)`
  align-items: center;
  justify-content: center;
`

const Swatch = styled(NodeBox)`
  flex-direction: row;
  overflow: hidden;
  span {
    width: 34px;
    text-align: center;
    line-height: 13px;
  }
  i {
    flex: 1;
    border-left: 1px solid #333;
    background: #6c64ff;
  }
`

const Slider = styled(NodeBox)`
  flex-direction: row;
  label {
    width: 23px;
    border-right: 1px solid #333;
    background: ${tones.dim};
    line-height: 13px;
    text-align: center;
  }
  input {
    appearance: none;
    flex: 1;
    min-width: 0;
    margin: 0 7px;
    background: repeating-linear-gradient(90deg, #aaa 0 1px, transparent 1px 11px) center / 100% 4px no-repeat;
  }
  input::-webkit-slider-thumb {
    appearance: none;
    width: 5px;
    height: 5px;
    border: 1px solid #111;
    background: #fff;
    transform: rotate(45deg);
  }
  output {
    position: absolute;
    left: 51px;
    top: 1px;
    background: #d2d2d2;
  }
`

const Note = styled(NodeBox)`
  align-items: center;
  justify-content: center;
  background: #fffa5a;
  color: #85853a;
  font-family: 'Liberation Mono', monospace;
`

const panelTones = {
  yellow: ['#fffa55', '#f5f053', '#dfdb4d', '#7d7b2c', '#97912f'],
  green: ['#99ff33', '#8ff52f', '#88e02c', '#3f8a1c', '#57a51e']
}

const DataPanel = styled.div`
  position: absolute;
  border: 1px solid #333;
  border-radius: 3px;
  background: ${p => panelTones[p.$tone][0]};
  color: ${p => panelTones[p.$tone][3]};
  font: 8px/11px 'Liberation Mono', monospace;
  overflow: hidden;
`

const PanelHead = styled.div`
  height: 12px;
  padding-right: 9px;
  background: ${p => panelTones[p.$tone][2]};
  text-align: right;
`

const PanelRows = styled.div`
  display: grid;
  grid-auto-rows: 1fr;
`

const PanelRow = styled.div`
  display: flex;
  background: ${p => (p.$alt ? panelTones[p.$tone][1] : 'transparent')};
  span {
    width: 14px;
    margin-right: 1px;
    padding-right: 2px;
    border-right: 1px solid ${p => panelTones[p.$tone][4]};
    text-align: right;
  }
`

const PanelScroll = styled.div`
  position: absolute;
  right: 0;
  top: 0;
  width: 6px;
  border-radius: 0 0 3px 3px;
  background: ${p => panelTones[p.$tone][4]};
`

const Panel = ({ at: [x, y, w, h], tone, path, rows, body, scroll }) => (
  <DataPanel $tone={tone} style={{ left: x, top: y, width: w, height: h }}>
    <PanelHead $tone={tone}>{path}</PanelHead>
    <PanelRows style={{ height: body }}>
      {rows.map((row, i) => (
        <PanelRow key={i} $tone={tone} $alt={i % 2 === 1}><span>{i}</span>{row}</PanelRow>
      ))}
    </PanelRows>
    <PanelScroll $tone={tone} style={{ height: scroll }} />
  </DataPanel>
)

const wires = [
  'M90 244C218 244 17 65 145 65',
  'M90 244C128 244 100 301 138 301',
  'M90 244C360 244 660 252 930 252',
  'M198 72C240 72 176 128 218 128',
  'M198 72C430 72 630 127 862 127',
  'M345 129C450 129 490 175 598 175',
  'M345 129C491 129 227 341 373 341',
  'M650 165C745 165 765 113 862 113',
  'M650 165C790 165 610 349 750 349',
  'M915 134C993 134 852 252 930 252',
  'M810 356C900 356 930 336 1027 336'
]

const thinWires = [
  'M268 128C281 128 279 144 292 144',
  'M548 135C576 135 570 155 598 155',
  'M838 170C850 170 850 156 862 156',
  'M706 366C725 366 730 363 750 363',
  'M704 390C725 390 729 378 750 378'
]

const greenWire = 'M650 165C722 165 620 55 692 55'

const sockets = [
  [147, 65], [195, 58], [195, 72], [220, 128], [265, 128], [294, 115], [294, 129], [294, 144],
  [342, 129], [51, 244], [88, 244], [508, 135], [545, 135], [600, 155], [600, 175], [647, 165],
  [140, 301], [256, 301], [375, 341], [460, 341], [694, 55], [810, 55], [629, 366], [703, 366],
  [701, 390], [753, 320], [753, 334], [753, 349], [753, 363], [753, 378], [753, 392], [807, 356],
  [865, 113], [865, 127], [865, 142], [865, 156], [912, 134], [836, 170], [932, 252], [982, 252],
  [1029, 321], [1029, 336], [1029, 350], [1029, 365], [1076, 343]
]

const range = n => Array.from({ length: n }, (_, i) => i)

const Board = () => (
  <Canvas>
    <Wires fill="none">
      <defs>
        <linearGradient id="toGreen" x1="0" y1="1" x2="0" y2="0">
          <stop offset="0" stopColor="#aaa" />
          <stop offset=".4" stopColor="#7fc050" />
          <stop offset="1" stopColor="#6fc52a" />
        </linearGradient>
        <radialGradient id="dial"><stop offset="0" stopColor="#f2f2f2" /><stop offset="1" stopColor="#b8b8b8" /></radialGradient>
      </defs>
      <g stroke="#b5b1aa">
        {range(11).map(i => <path key={i} d={`M${Math.round(102 + i * 108.4) - .5} 0v524`} />)}
        {range(15).map(i => <path key={i} d={`M0 ${Math.round(18 + i * 36.15) + .5}h1201`} />)}
      </g>
      <path d={greenWire} stroke="url(#toGreen)" strokeWidth="4" />
      <path d={greenWire} stroke="#cfe0b8" strokeWidth="1.500" />
      {wires.map(d => (
        <g key={d}>
          <path d={d} stroke="#5e5d5a" strokeWidth="4" />
          <path d={d} stroke="#a5a29c" strokeWidth="1.500" />
        </g>
      ))}
      <path d="M985 252C1033 252 979 321 1027 321" stroke="#5e5d5a" strokeWidth="4" strokeDasharray="10 3" />
      <path d="M985 252C1033 252 979 321 1027 321" stroke="#c4c0b8" strokeWidth="1.500" strokeDasharray="8 5" strokeDashoffset="-1" />
      {thinWires.map(d => <path key={d} d={d} stroke="#555" strokeWidth="2.500" />)}
      {sockets.map(([x, y]) => <circle key={`${x}-${y}`} cx={x} cy={y} r="3" fill="#fff" stroke="#111" strokeWidth="1.500" />)}
      <path d="M1114 481l8-4 4 3 6-6 2 2-14 15-1-6z" fill="#111" />
      <circle cx="1143" cy="494" r="20" fill="#fff" stroke="#555" />
      <circle cx="1143" cy="494" r="17" fill="url(#dial)" stroke="#777" />
      <path d="M1149 475l6 3-5 4zM1124 486l6 3-6 5zM1154 499l7 0-3 6zM1133 512l6-5 1 6z" fill="#fff" />
    </Wires>

    <Node at={[147, 49, 48, 33]} name="Area" ins={['G']} outs={['A', 'C']} timer="17ms" timerBg="#e08410" />
    <Node at={[220, 114, 45, 28]} name="Lng" ins={['L']} outs={['L']} />
    <Node at={[294, 106, 48, 47]} tone="dim" name="Series" ins={['S', 'N', 'C']} outs={['S']} />
    <Param $tone="light" style={{ left: 51, top: 237, width: 37, height: 15 }}>Geo</Param>
    <Param $tone="dim" style={{ left: 508, top: 128, width: 37, height: 15 }}>Txt</Param>
    <Node at={[600, 143, 47, 44]} tone="dim" name="Concat" ins={['A', 'B']} outs={['R']} />
    <Node at={[865, 104, 47, 62]} name="TextDot" ins={['T', 'P', 'F', 'S']} outs={['T']} />
    <Node at={[932, 232, 50, 39]} name="Group" ins={['O']} outs={['G']} />
    <Node at={[753, 312, 54, 89]} name="Attributes" ins={['K', 'V', 'N', '[]L', 'C', '[]M']} outs={['A']} end />
    <Node at={[1029, 313, 48, 77]} tone="orange" name="Bake" ins={['G', 'A', 'N', 'B']} outs={['S']} action="Activate" timer="10ms" timerBg="#d3c168" />

    <Slider $tone="light" style={{ left: 720, top: 162, width: 116, height: 15 }}>
      <label htmlFor="size">Size</label>
      <input id="size" type="range" min="0" max="50" defaultValue="10" />
      <output htmlFor="size">10</output>
    </Slider>
    <Note style={{ left: 629, top: 355, width: 74, height: 24 }}>Box Geo</Note>
    <Swatch $tone="dim" style={{ left: 637, top: 382, width: 64, height: 15 }}><span>Swatch</span><i /></Swatch>

    <Panel at={[140, 180, 116, 242]} tone="yellow" path="{0}" rows={range(20).map(() => 'Referenced Brep')} body={231} scroll={172} />
    <Panel at={[375, 178, 85, 326]} tone="yellow" path="{0;0}" rows={range(27).map(String)} body={312} scroll={311} />
    <Panel at={[694, 1, 116, 110]} tone="green" path="{0;0}" rows={range(9).map(i => `Box_${i}`)} body={104} scroll={34} />
  </Canvas>
)

const ribbon = [
  ['Geometry', [['hexX', 'hexArrow'], ['hexRing', 'hexArc', 'hexSpiral', 'hexLine', 'hexPlane', 'hexCage'], ['hexBox', 'hexTube', 'hexNet', 'hexSurf']]],
  ['Primitive', [['hexBool', 'hexInt', 'hexNum', 'hexText']]],
  ['Input', [['press', 'sketch'], ['toggle', 'knob', 'digits', 'list'], ['gradient', 'swatches']]],
  ['Util', [['cherry', 'tree'], ['arrowDark', 'arrowLight'], ['rings', 'flask']]],
  ['OpenNest', [['leaves', 'waves'], ['tShape'], ['rolled'], ['para', 'nestPoly', 'circles4', 'nestBox', 'dice', 'nestHex', 'rhinoHead'], ['sheetXY', 'fold']]]
]

const ghTabs = ['Params', 'Maths', 'Sets', 'Vector', 'Curve', 'Surface', 'Mesh', 'Intersect', 'Transform', 'Display', 'Pufferfish', 'Wb', 'PanelingTools', 'Kangaroo2', 'Human', 'LunchBox', 'Elefront', 'V-Ray']

const Caret = ({ w = 13 }) => <MiniButton type="button" $w={w} aria-label="More"><Icon name="caret" size={8} /></MiniButton>

const Grasshopper = () => (
  <GhWindow>
    <GhTitle>
      Grasshopper - Elefront_ListLabelling*
      <WindowButtons>
        <MiniButton type="button" $w={28} aria-label="Minimize"><Icon name="minimize" size={12} /></MiniButton>
        <MiniButton type="button" $w={28} aria-label="Maximize"><Icon name="maximize" size={12} /></MiniButton>
        <MiniButton type="button" $w={28} aria-label="Close"><Icon name="close" size={12} /></MiniButton>
      </WindowButtons>
    </GhTitle>
    <GhMenu>
      {['File', 'Edit', 'View', 'Display', 'Solution', 'Help', 'Elefront_ListLabelling*'].map(t => <Button type="button" key={t}>{t}</Button>)}
    </GhMenu>
    <GhTabs>
      {ghTabs.map((t, i) => <GhTab type="button" key={t} $active={i === 0}>{t}</GhTab>)}
    </GhTabs>
    <Ribbon>
      {ribbon.map(([name, groups]) => (
        <RibbonPanel key={name}>
          <RibbonIcons>
            {groups.map((group, i) => (
              <RibbonGroup key={i}>{group.map(n => <ToolButton key={n} name={n} size={24} />)}</RibbonGroup>
            ))}
          </RibbonIcons>
          <RibbonName><span>{name}</span><Icon name="down" size={12} /></RibbonName>
        </RibbonPanel>
      ))}
    </Ribbon>
    <CanvasBar>
      <ToolButton name="open" />
      <ToolButton name="save" />
      <BarGap $m={5} />
      <ZoomBox>
        <ZoomSelect aria-label="Zoom" defaultValue="72%"><option>72%</option></ZoomSelect>
        <Svg viewBox="0 0 24 24" $size={9}><path d="M1 6l11 11L23 6" fill="none" stroke="#444" strokeWidth="2.500" /></Svg>
      </ZoomBox>
      <ToolButton name="extents" /><Caret />
      <ToolButton name="eye" /><Caret />
      <ToolButton name="pencil" />
      <BarGap />
      <ToolButton name="bin" /><Caret />
      <Spacer />
      <ToolButton name="prevOff" />
      <ToolButton name="prevWire" />
      <ToolButton name="prevShade" $active />
      <BarGap $m={7} />
      <ToolButton name="tealTube" />
      <ToolButton name="greenTube" $active />
      <ToolButton name="ball" />
      <BarGap />
      <ToolButton name="crystal" /><Caret w={7} />
    </CanvasBar>
    <Board />
    <GhStatus>
      <Icon name="info" size={16} />
      Autosave complete (19 seconds ago)
      <Version>1.0.0007</Version>
      <SizeGrip />
    </GhStatus>
  </GhWindow>
)

/* ---------- taskbar ---------- */

const Taskbar = styled.footer`
  display: flex;
  height: 40px;
  background: linear-gradient(90deg, #2c2926, #3e3c3a 8%, #464646 20%, #464646 75%, #363636 88%, #41382d);
  color: #fff;
`

const TaskButton = styled(Button)`
  width: 49px;
  height: 40px;
  ${p => p.$open && css`
    width: 41px;
    margin: 0 4px;
    box-shadow: inset 0 -2px #fbd9a8;
  `}
  ${p => p.$focus && css`
    width: 48px;
    margin: 0;
    background: #707070;
  `}
  &:nth-child(-n + 3) {
    width: 48px;
  }
  &:nth-child(3) {
    margin-right: 3px;
  }
`

const Tray = styled.div`
  display: flex;
  align-items: center;
  margin-left: auto;
  padding-right: 4px;
  ${Button} {
    width: 24px;
    height: 40px;
  }
`

const Clock = styled.time`
  width: 72px;
  line-height: 18px;
  text-align: center;
`

const Notices = styled.div`
  position: relative;
  margin: 0 6px 0 13px;
  padding-right: 11px;
`

const Count = styled.span`
  position: absolute;
  right: 3px;
  top: 6px;
  width: 16px;
  height: 16px;
  border: 1px solid #999;
  border-radius: 50%;
  background: #333;
  font-size: 10px;
  line-height: 14px;
  text-align: center;
`

const DeskEdge = styled.span`
  width: 1px;
  height: 40px;
  background: #8a8a8a;
`

const tasks = [
  ['start'], ['search'], ['cortana'], ['edge'], ['explorer', 1], ['store'], ['mail'], ['firefox'],
  ['outlook'], ['word'], ['excel'], ['chrome', 1], ['office'], ['rhino7', 1], ['rhino7', 1, 1]
]

const menus = ['File', 'Edit', 'View', 'Curve', 'Surface', 'SubD', 'Solid', 'Mesh', 'Dimension', 'Transform', 'Tools', 'Analyze', 'Render', 'Panels', 'Paneling Tools', 'SectionTools', 'V-Ray', 'Help']

const history = ['28 text dots, 28 polysurfaces added to selection.', 'Command: _Delete', '28 polysurfaces added to selection.', 'Command: _Delete', '28 polysurfaces added to selection.', '28 polysurfaces added to selection.']

const filters = ['Points', 'Curves', 'Surfaces', 'Polysurfaces', 'SubDs', 'Meshes', 'Annotations', 'Lights', 'Blocks', 'Control Points', 'Point Clouds', 'Hatches', 'Others']

const toolTabs = ['Standard', 'CPlanes', 'Set View', 'Display', 'Select', 'Viewport Layout', 'Visibility', 'Transform', 'Curve Tools', 'Su']

const topTools = ['bulbOff', 'bulbOn', 'bulbSelect', 'bulbInvert', 'bulbSwap', '|', 'sheetBulb', 'sheetBox', 'sheetShape', 'lock', 'unlock', 'unlockSelect', 'lockInvert', 'lockSwap', '|', 'points', 'pointsDark', '|', 'clip', 'clipOff', '|', 'bulbPair', 'bulbPair', 'bulbPair']

const sideTools = ['pointer', 'point', 'polyline', 'curve', 'circle', 'ellipse', 'arc', 'rect', 'polygon', 'fillet', 'surface', 'bend', 'box', 'spheres', 'pipe', 'mesh', 'gears', 'explode', 'trim', 'split', 'join', 'group', 'blend', 'offset', 'textTool', 'move', 'array', 'orient', 'solidCut', 'project', 'grid9', 'align', 'sheetsBlue', 'check', 'solids', 'pyramid']
const plainTools = ['pointer', 'gears', 'explode', 'trim', 'split', 'group', 'blend', 'textTool', 'array', 'orient']

const snaps = ['End', 'Near', 'Point', 'Mid', 'Cen', 'Int', 'Perp', 'Tan', 'Quad', 'Knot', 'Vertex']

const App = () => (
  <>
    <GlobalStyle />
    <Desktop>
      <TitleBar>
        <Icon name="rhino" size={16} />
        Baking_Labelling.3dm (2 MB) - Rhino 7 Commercial (read-only) - [Perspective]
        <WindowButtons>
          <MiniButton type="button" $w={28} $color="#999" aria-label="Minimize"><Icon name="minimize" size={12} /></MiniButton>
          <MiniButton type="button" $w={28} $color="#999" aria-label="Restore"><Icon name="restore" size={12} /></MiniButton>
          <MiniButton type="button" $w={28} $color="#999" aria-label="Close"><Icon name="close" size={12} /></MiniButton>
        </WindowButtons>
      </TitleBar>
      <MenuBar>{menus.map(m => <Button type="button" key={m}>{m}</Button>)}</MenuBar>

      <History>
        <HistoryLines>{history.map((l, i) => <div key={i}>{l}</div>)}</HistoryLines>
        <ScrollColumn>
          <MiniButton type="button" aria-label="Scroll up" $h={18}><Icon name="chevUp" size={9} /></MiniButton>
          <ScrollThumb />
          <MiniButton type="button" aria-label="Scroll down" $h={17}><Icon name="chevDown" size={9} /></MiniButton>
        </ScrollColumn>
      </History>
      <CommandRow>
        <label htmlFor="command">Command:</label>
        <CommandInput id="command" type="text" />
        <Spinner>
          <MiniButton type="button" aria-label="Previous" $w={14} $h={8}><Icon name="tri" size={7} /></MiniButton>
          <MiniButton type="button" aria-label="Next" $w={14} $h={8}><Icon name="triDown" size={7} /></MiniButton>
        </Spinner>
      </CommandRow>
      <Rule $top={3} />

      <FilterBar>
        {filters.map((f, i) => <CheckBox key={f} label={f} wide={i < 3} />)}
        <CheckBox label="Disable" disabled />
        <CheckBox label="Sub-objects" disabled />
      </FilterBar>
      <Rule />

      <ToolBar>
        <ToolTabs>
          {toolTabs.map(t => <ToolTab type="button" key={t} $active={t === 'Visibility'}>{t}</ToolTab>)}
          <GearButton type="button" $color="#777" aria-label="Options"><Icon name="gear" size={14} /></GearButton>
        </ToolTabs>
        <IconRow>
          {topTools.map((t, i) => (t === '|' ? <IconGap key={i} /> : <ToolButton key={i} name={t} />))}
        </IconRow>
      </ToolBar>

      <Workspace>
        <ToolColumn>
          <Grip />
          <ToolGrid>
            {sideTools.map(t => <ToolButton key={t} name={t} $flyout={!plainTools.includes(t)} />)}
          </ToolGrid>
        </ToolColumn>
        <ViewColumn>
          <Viewport>
            <ViewTitle type="button">Perspective<Icon name="caret" size={10} /></ViewTitle>
            <Crates />
            <Axes viewBox="0 0 50 52" fill="none" stroke="#5f5f5f">
              <path d="M6 36V9M6 36l14-14M6 36l26 8" />
              <g fill="#5f5f5f" stroke="none">
                <text x="8" y="10">z</text>
                <text x="22" y="22">y</text>
                <text x="34" y="47">x</text>
              </g>
            </Axes>
          </Viewport>
          <ViewTabs>
            {['Perspective', 'Top', 'Front', 'Right'].map((t, i) => <ViewTab type="button" key={t} $active={i === 0}>{t}</ViewTab>)}
            <MiniButton type="button" aria-label="New view" $w={11}><Icon name="plus" size={10} /></MiniButton>
          </ViewTabs>
        </ViewColumn>
        <SidePanel>
          <SideTools>
            <MiniButton type="button" aria-label="Visible"><Icon name="bulbLying" size={16} /></MiniButton>
            <MiniButton type="button" $color="#c4cbe0" aria-label="Panel options"><Icon name="gear" size={14} /></MiniButton>
          </SideTools>
          <SideBody>
            <LayerTable>
              <thead><tr><th>Material</th></tr></thead>
              <tbody>
                {range(8).map(i => <tr key={i}><LayerCell $selected={i === 5}><i /></LayerCell></tr>)}
              </tbody>
            </LayerTable>
            <LayerSpace />
            <ScrollRow>
              <MiniButton type="button" aria-label="Scroll left" $w={17}><Icon name="chevLeft" size={12} /></MiniButton>
              <ScrollBarX />
              <MiniButton type="button" aria-label="Scroll right" $w={17}><Icon name="chevRight" size={12} /></MiniButton>
            </ScrollRow>
          </SideBody>
        </SidePanel>
      </Workspace>

      <Bar>
        {snaps.map(s => <CheckBox key={s} label={s} off={s === 'Tan' || s === 'Quad'} />)}
        <CheckBox label="Project" partial />
        <CheckBox label="Disable" disabled apart />
      </Bar>
      <StatusBar>
        <StatusCell $w={50}>CPlane</StatusCell>
        <StatusCell $w={88}>x 4313.962</StatusCell>
        <StatusCell $w={88}>y 2356.321</StatusCell>
        <StatusCell $w={88}>z 0.000</StatusCell>
        <StatusCell $w={88}>Millimeters</StatusCell>
        <StatusCell $w={168} $left><ColorChip />Default</StatusCell>
        <StatusCell $w={66} $on>Grid Snap</StatusCell>
        <StatusCell $w={44}>Ortho</StatusCell>
        <StatusCell $w={47}>Planar</StatusCell>
        <StatusCell $w={47} $on>Osnap</StatusCell>
        <StatusCell $w={73} $on>SmartTrack</StatusCell>
        <StatusCell $w={60} $on>Gumball</StatusCell>
        <StatusCell $w={92}>Record History</StatusCell>
        <StatusCell $w={40}>Filter</StatusCell>
        <StatusCell $left>Available physical memory: 8580 MB</StatusCell>
      </StatusBar>

      <Taskbar>
        {tasks.map(([name, open, focus], i) => (
          <TaskButton type="button" key={i} aria-label={name} $open={open} $focus={focus}>
            <Icon name={name} size={i < 3 ? 20 : 24} />
          </TaskButton>
        ))}
        <Tray>
          {['chevron', 'meet', 'network', 'muted'].map(n => (
            <Button type="button" key={n} aria-label={n}><Icon name={n} size={16} /></Button>
          ))}
          <Clock>22:47<br />13/03/2022</Clock>
          <Notices>
            <Icon name="note" size={17} />
            <Count>3</Count>
          </Notices>
          <DeskEdge />
        </Tray>
      </Taskbar>

      <Grasshopper />
    </Desktop>
  </>
)

export default App
